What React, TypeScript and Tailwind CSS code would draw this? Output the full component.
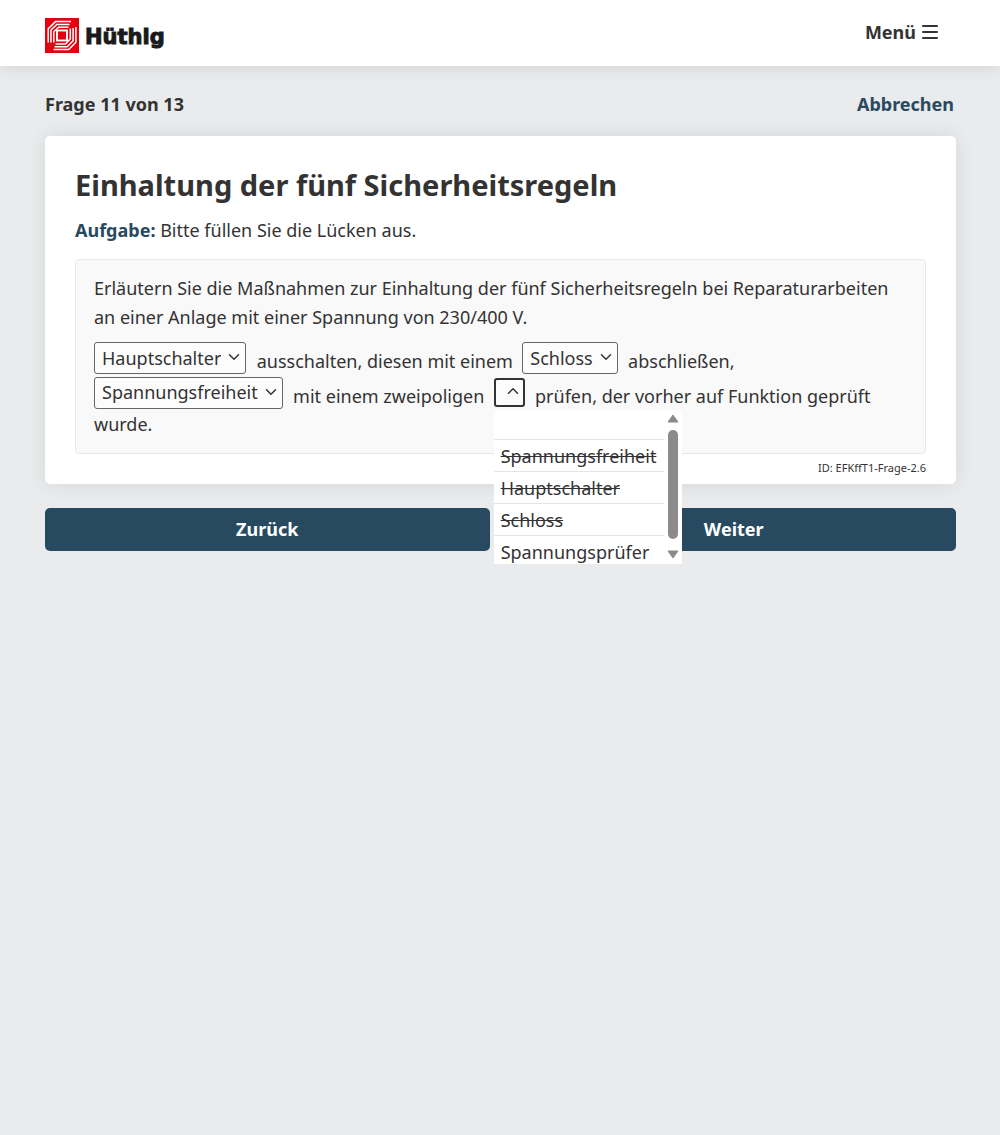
import { useState } from "react"
import { ChevronDown, ChevronUp } from "lucide-react"

const answers = ["", "Spannungsfreiheit", "Hauptschalter", "Schloss", "Spannungsprüfer"]

function Logo() {
  return (
    <a href="#" className="flex items-center gap-1.5" aria-label="Hüthig">
      <svg width="34" height="35" viewBox="0 0 34 35">
        <rect width="34" height="35" fill="#e3000f" />
        <g fill="none" stroke="#fff" strokeWidth="1.5">
          <rect x="12" y="12.5" width="10" height="10" strokeWidth="1.9" />
          <path d="M23.500 9.200H13.500L8.800 13.800V24.500" />
          <path d="M24.500 6.400H11.800L6 12V24.500" />
          <path d="M26 3.600H10.500L3.200 10.800V24.500" />
          <path d="M10.500 25.900H20.500L25.300 21V10.500" />
          <path d="M9.500 28.700H22.200L28.100 22.700V10" />
          <path d="M8.500 31.500H23.800L30.900 24.300V9" />
        </g>
      </svg>
      <span className="pt-1 font-['DejaVu_Sans',sans-serif] text-[21px] leading-7 font-bold text-[#1a1a1a] [-webkit-text-stroke:1px_#1a1a1a]">
        Hüthig
      </span>
    </a>
  )
}

type GapProps = {
  label: string
  initial: string
  open?: boolean
}

function Gap({ label, initial, open = false }: GapProps) {
  const [value, setValue] = useState(initial)
  const Icon = open ? ChevronUp : ChevronDown

  return (
    <span className={`relative mt-px mr-px inline-block ${open ? "align-[10px]" : "align-[3px]"}`}>
      <select
        aria-label={label}
        value={value}
        onChange={(e) => setValue(e.target.value)}
        className={`block appearance-none rounded-[3px] bg-white/50 text-[#333] outline-none [field-sizing:content] ${
          open ? "h-[29px] w-[31px] border-2 border-[#333]" : "h-8 border border-[#666] pr-6 pl-[7px]"
        }`}
      >
        {answers.map((answer) => (
          <option key={answer} value={answer}>
            {answer}
          </option>
        ))}
      </select>
      <Icon
        className={`pointer-events-none absolute right-[3px] size-[18px] text-[#333] ${open ? "top-1" : "top-1.5"}`}
      />
      {open && <AnswerList />}
    </span>
  )
}

function AnswerList() {
  return (
    <span className="absolute top-8 left-0 z-10 flex h-[154px] w-[188px] overflow-hidden bg-white">
      <span role="listbox" aria-label="Antworten" className="w-[170px]">
        {answers.map((answer, i) => (
          <span
            key={answer}
            role="option"
            aria-selected={answer === ""}
            className={`block border-b border-[#e5e5e5] px-[7px] leading-8 whitespace-nowrap ${
              i === 0 ? "h-[30px]" : "h-8"
            } ${i > 0 && i < 4 ? "line-through" : ""}`}
          >
            {answer}
          </span>
        ))}
      </span>
      {/* Scrollbar */}
      <svg className="ml-[3px]" width="12" height="154" viewBox="0 0 12 154" fill="#8b8b8b">
        <path d="M6 5L11 12H1Z" stroke="#8b8b8b" strokeLinejoin="round" />
        <rect x="1" y="20" width="10" height="109" rx="5" />
        <path d="M6 148L1 141H11Z" stroke="#8b8b8b" strokeLinejoin="round" />
      </svg>
    </span>
  )
}

export default function App() {
  return (
    <div className="min-h-screen bg-[#e9ebed] font-['Noto_Sans',sans-serif] text-lg leading-[29px] text-[#333]">
      <header className="flex h-[66px] items-center justify-between bg-white pt-1 pr-[62px] pl-[45px] shadow-[0_0_16px_rgba(0,0,0,0.12)]">
        <Logo />
        <button className="mb-1.5 flex items-center gap-1.5 font-bold">
          Menü
          <svg width="16" height="14" viewBox="0 0 16 14" stroke="#333" strokeWidth="2" strokeLinecap="round">
            <path d="M1 1H15M1 7H15M1 13H15" />
          </svg>
        </button>
      </header>

      <main className="pt-6 pr-11 pl-[45px]">
        <div className="flex justify-between pr-0.5 font-bold">
          <p>Frage 11 von 13</p>
          <a href="#" className="text-[#274a61]">
            Abbrechen
          </a>
        </div>

        {/* Question */}
        <section className="mt-[17px] rounded-[5px] bg-white px-[30px] pt-[29px] pb-0.5 shadow-[0_0_20px_rgba(0,0,0,0.09)]">
          <h1 className="text-[29px] leading-10 font-bold">Einhaltung der fünf Sicherheitsregeln</h1>
          <p className="mt-[11px]">
            <strong className="font-bold text-[#274a61]">Aufgabe:</strong> Bitte füllen Sie die Lücken aus.
          </p>
          <div className="mt-3.5 rounded-[4px] border border-[#e8e8e8] bg-[#f9f9f9] px-[18px] py-3.5">
            <p>
              Erläutern Sie die Maßnahmen zur Einhaltung der fünf Sicherheitsregeln bei Reparaturarbeiten an einer
              Anlage mit einer Spannung von 230/400 V.
            </p>
            <p className="mt-[9px]">
              <Gap label="Lücke 1" initial="Hauptschalter" />
              &nbsp; ausschalten, diesen mit einem&nbsp; <Gap label="Lücke 2" initial="Schloss" />
              &nbsp; abschließen, <Gap label="Lücke 3" initial="Spannungsfreiheit" />
              &nbsp; mit einem zweipoligen&nbsp; <Gap label="Lücke 4" initial="" open />
              &nbsp; prüfen, der vorher auf Funktion geprüft wurde.
            </p>
          </div>
          <p className="text-right text-[11px] leading-7">ID: EFKffT1-Frage-2.6</p>
        </section>

        {/* Navigation */}
        <div className="mt-6 grid grid-cols-2 gap-[22px] font-bold text-white">
          <button className="h-[43px] rounded-[5px] bg-[#274a61]">Zurück</button>
          <button className="h-[43px] rounded-[5px] bg-[#274a61]">Weiter</button>
        </div>
      </main>
    </div>
  )
}
